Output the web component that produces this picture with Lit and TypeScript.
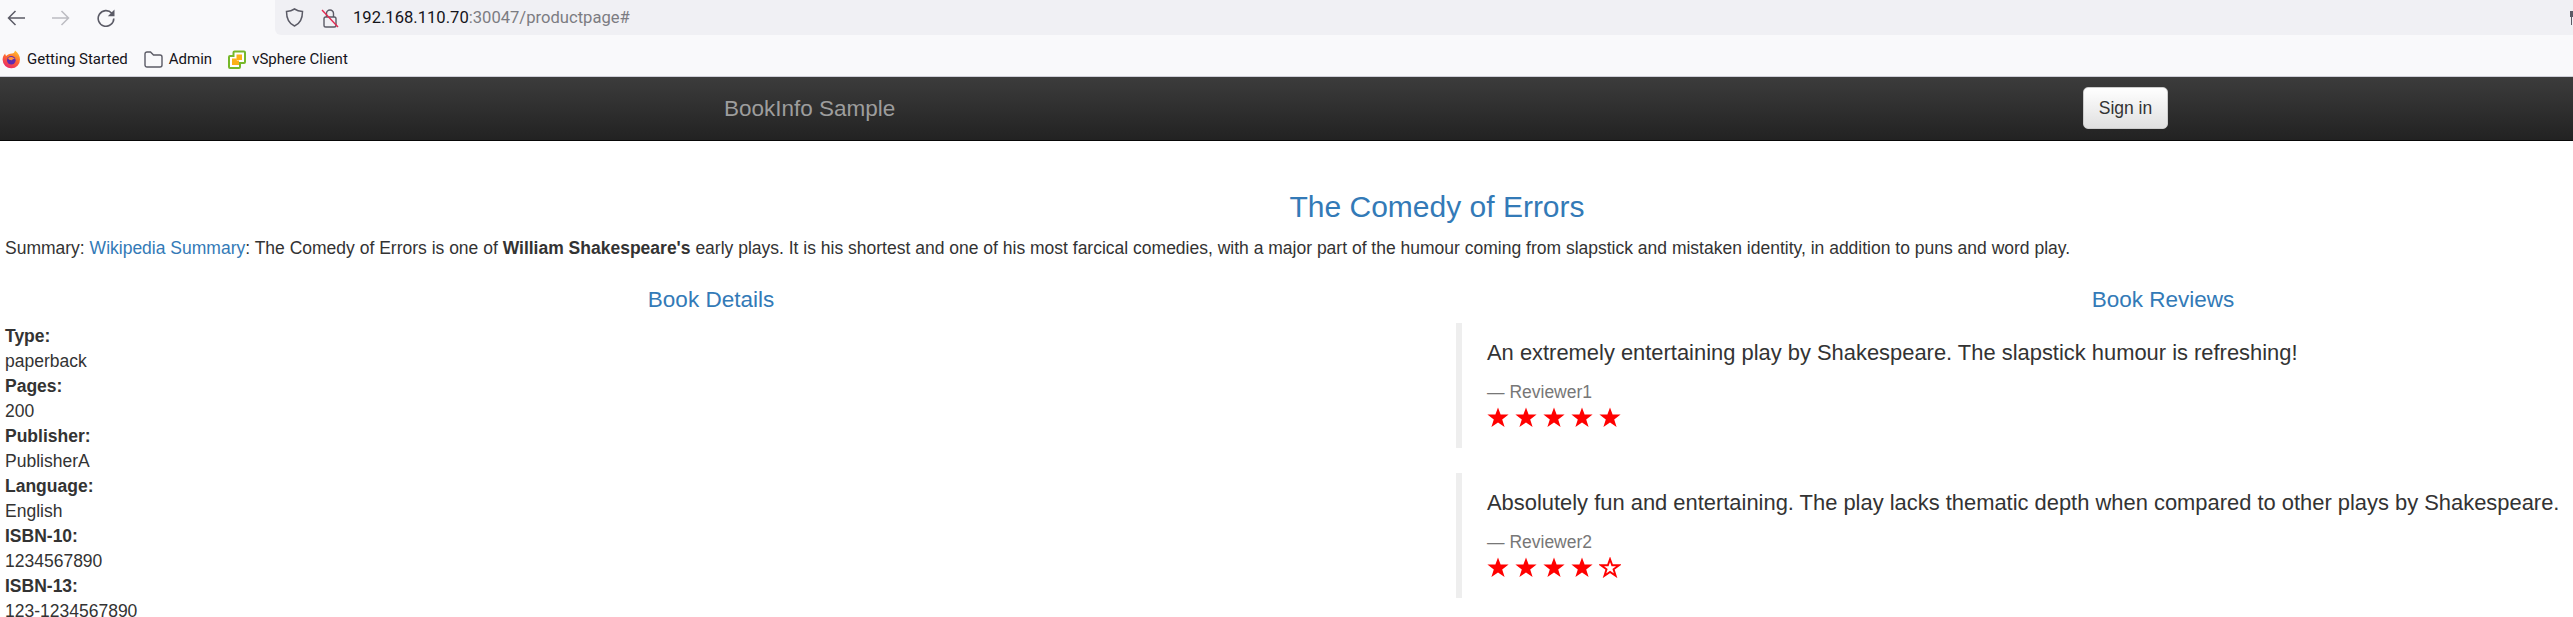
import { LitElement, html, css, svg } from "lit";
import { customElement } from "lit/decorators.js";

const DETAILS = [
  ["Type:", "paperback"],
  ["Pages:", "200"],
  ["Publisher:", "PublisherA"],
  ["Language:", "English"],
  ["ISBN-10:", "1234567890"],
  ["ISBN-13:", "123-1234567890"],
];

const REVIEWS = [
  {
    text: "An extremely entertaining play by Shakespeare. The slapstick humour is refreshing!",
    who: "Reviewer1",
    stars: 5,
  },
  {
    text: "Absolutely fun and entertaining. The play lacks thematic depth when compared to other plays by Shakespeare.",
    who: "Reviewer2",
    stars: 4,
  },
];

const STAR = "11,0.4 13.6,7.6 21.6,7.6 15.200,12.400 17.600,20 11,15.400 4.400,20 6.800,12.400 0.400,7.600 8.400,7.600";

@customElement("app-root")
export class AppRoot extends LitElement {
  static styles = css`
    :host {
      display: block;
      width: 2573px;
      height: 617px;
      overflow: hidden;
      background: #fff;
      font-family: "Liberation Sans", Arial, sans-serif;
      font-size: 17.5px;
      line-height: 25px;
      color: #333;
    }
    .toolbar {
      height: 36px;
      display: flex;
      align-items: center;
      background: #f9f9fb;
    }
    .nav-icons {
      width: 275px;
      flex: none;
      display: flex;
      align-items: center;
      gap: 27px;
      padding-left: 7px;
      box-sizing: border-box;
    }
    .url-bar {
      flex: 1;
      height: 35px;
      align-self: flex-start;
      background: #f0f0f4;
      border-bottom-left-radius: 6px;
      display: flex;
      align-items: center;
      font-family: Roboto, sans-serif;
      font-size: 16.600px;
      color: #15141a;
      padding-left: 10px;
    }
    .url-bar .shield {
      margin-right: 17px;
    }
    .url-bar .lock {
      margin-right: 14px;
    }
    .url-bar .dim {
      color: #7c7c82;
    }
    .url-bar .clipped {
      margin-left: auto;
    }
    .bookmarks {
      height: 41px;
      box-sizing: border-box;
      display: flex;
      align-items: center;
      padding: 6px 0 0 2px;
      background: #f9f9fb;
      border-bottom: 1px solid #cfcfd8;
      font-family: Roboto, sans-serif;
      font-size: 15px;
      color: #15141a;
    }
    .mark {
      display: flex;
      align-items: center;
      gap: 6px;
      margin-right: 16px;
    }
    .navbar {
      height: 64px;
      box-sizing: border-box;
      padding-bottom: 1px;
      background: linear-gradient(to bottom, #3c3c3c, #222);
      border-bottom: 1px solid #080808;
      display: flex;
      align-items: center;
      width: 2874px;
    }
    .brand {
      margin-left: 724px;
      width: 1359px;
      font-size: 22.5px;
      color: #9d9d9d;
    }
    .sign-in {
      width: 85px;
      height: 42px;
      box-sizing: border-box;
      padding: 0;
      font: inherit;
      font-size: 17.5px;
      color: #333;
      border: 1px solid #ccc;
      border-radius: 5px;
      background: linear-gradient(to bottom, #fff, #e0e0e0);
    }
    .page {
      width: 2874px;
    }
    h3 {
      margin: 0;
      padding-top: 48px;
      line-height: 35px;
      font-size: 30px;
      font-weight: 500;
      text-align: center;
      color: #337ab7;
    }
    .summary {
      margin: 0;
      padding: 12px 0 0 5px;
    }
    .summary a {
      color: #337ab7;
      text-decoration: none;
    }
    .columns {
      display: grid;
      grid-template-columns: 1441px 1444px;
    }
    h4 {
      margin: 0;
      padding-top: 26px;
      line-height: 25px;
      font-size: 22.5px;
      font-weight: 500;
      text-align: center;
      color: #337ab7;
    }
    .details-head {
      padding-right: 19px;
    }
    dl {
      margin: 12px 0 0;
      padding-left: 5px;
    }
    dt {
      font-weight: 700;
    }
    dd {
      margin: 0;
    }
    .reviews {
      padding: 11px 0 0 15px;
    }
    blockquote {
      margin: 0 0 25px;
      height: 125px;
      box-sizing: border-box;
      padding: 13.5px 25px 0;
      border-left: 6px solid #eee;
      font-size: 21.920px;
      line-height: 31px;
    }
    blockquote p {
      margin: 0 0 12px;
    }
    .who {
      font-size: 17.5px;
      line-height: 25px;
      color: #777;
    }
    .stars {
      display: flex;
      gap: 6px;
      height: 25px;
      align-items: center;
    }
    svg {
      display: block;
      flex: none;
    }
  `;

  renderStar(filled: boolean) {
    return html`<svg width="22" height="21" viewBox="0 0 22 21">
      ${filled
        ? svg`<polygon points=${STAR} fill="#f00"></polygon>`
        : svg`<polygon points=${STAR} fill="#fff" stroke="#f00" stroke-width="2.300" transform="translate(1.800 1.900) scale(.84)"></polygon>`}
    </svg>`;
  }

  renderToolbar() {
    return html`<div class="toolbar">
      <div class="nav-icons">
        <svg width="18" height="18" viewBox="0 0 18 18" fill="none" stroke="#5b5b66" stroke-width="1.500">
          <path d="M18 9H1.500M8.500 2 1.500 9l7 7"></path>
        </svg>
        <svg width="18" height="18" viewBox="0 0 18 18" fill="none" stroke="#bcbcc2" stroke-width="1.500">
          <path d="M0 9h16.500M9.500 2l7 7-7 7"></path>
        </svg>
        <svg width="18" height="18" viewBox="0 0 18 18" fill="none" stroke="#5b5b66" stroke-width="1.600">
          <path d="M14.800 4.200A7.800 7.800 0 1 0 16.800 9.500"></path>
          <path d="M17.500 0.500v6.700h-6.700z" fill="#5b5b66" stroke="none"></path>
        </svg>
      </div>
      <div class="url-bar">
        <svg class="shield" width="19" height="19" viewBox="0 0 19 19" fill="none" stroke="#5b5b66" stroke-width="1.500">
          <path d="M9.500 1c2.300 1.500 5 2.300 8 2.500 0 7-1.500 11.800-8 14.500C3 15.300 1.500 10.500 1.500 3.500c3-.2 5.700-1 8-2.500z"></path>
        </svg>
        <svg class="lock" width="18" height="20" viewBox="0 0 18 20" fill="none">
          <path d="M5.500 9V5.500a3.500 3.500 0 0 1 7 0V9" stroke="#5b5b66" stroke-width="1.400"></path>
          <rect x="3" y="9" width="12" height="10" rx="1.800" stroke="#5b5b66" stroke-width="1.400"></rect>
          <path d="M1 2l16 17" stroke="#e22850" stroke-width="1.400"></path>
        </svg>
        <span>192.168.110.70</span><span class="dim">:30047/productpage#</span>
        <svg class="clipped" width="3" height="14" viewBox="0 0 3 14">
          <path d="M0 0h3v6H2v8H1V6H0z" fill="#5b5b66"></path>
        </svg>
      </div>
    </div>`;
  }

  renderBookmarks() {
    return html`<div class="bookmarks">
      <div class="mark">
        <svg width="19" height="19" viewBox="0 0 19 19">
          <defs>
            <linearGradient id="fx" x1="0.750" y1="0" x2="0.250" y2="1">
              <stop offset="0" stop-color="#ffc02e"></stop>
              <stop offset="0.450" stop-color="#ff6a30"></stop>
              <stop offset="1" stop-color="#e8246c"></stop>
            </linearGradient>
          </defs>
          <path d="M13 .5c3.300 2.500 5 5.500 5 9a8.700 8.700 0 0 1-17.400.3C.6 7 1.800 4.800 3.200 3.500c0 1.200.5 2 1 2.500C5.500 4.300 7.500 3.600 10 3.500c1.500-.1 2.700-1.200 3-3z" fill="url(#fx)"></path>
          <circle cx="9.300" cy="10.200" r="4.300" fill="#5f2bb0"></circle>
          <path d="M6 8c2-1.400 5-1.300 6.800 1-1.300-.1-2.400.2-3 1.200C8 10.300 6.600 9.500 6 8z" fill="#ff9240"></path>
        </svg>
        <span>Getting Started</span>
      </div>
      <div class="mark">
        <svg width="19" height="17" viewBox="0 0 19 17" fill="none" stroke="#5b5b66" stroke-width="1.400">
          <path d="M1 3a2 2 0 0 1 2-2h3.500l3 3H16a2 2 0 0 1 2 2v8a2 2 0 0 1-2 2H3a2 2 0 0 1-2-2z"></path>
        </svg>
        <span>Admin</span>
      </div>
      <div class="mark">
        <svg width="18" height="19" viewBox="0 0 18 19">
          <path d="M6.500 1.500H16a1 1 0 0 1 1 1V12a1 1 0 0 1-1 1h-4v4a1 1 0 0 1-1 1H2a1 1 0 0 1-1-1V7a1 1 0 0 1 1-1h3.500V2.500a1 1 0 0 1 1-1z" fill="#fff" stroke="#76b82a" stroke-width="2"></path>
          <path d="M8.500 4.500h5.500v5.500h-5.500z" fill="#fbb117"></path>
          <path d="M4 8.500h4.800V10.500H11v4.500H4z" fill="#fbb117"></path>
        </svg>
        <span>vSphere Client</span>
      </div>
    </div>`;
  }

  render() {
    return html`
      ${this.renderToolbar()} ${this.renderBookmarks()}
      <div class="navbar">
        <div class="brand">BookInfo Sample</div>
        <button class="sign-in">Sign in</button>
      </div>
      <div class="page">
        <h3>The Comedy of Errors</h3>
        <p class="summary">
          Summary: <a href="#">Wikipedia Summary</a>: The Comedy of Errors is one of
          <b>William Shakespeare's</b> early plays. It is his shortest and one of his most
          farcical comedies, with a major part of the humour coming from slapstick and mistaken
          identity, in addition to puns and word play.
        </p>
        <div class="columns">
          <div>
            <h4 class="details-head">Book Details</h4>
            <dl>
              ${DETAILS.map(([k, v]) => html`<dt>${k}</dt><dd>${v}</dd>`)}
            </dl>
          </div>
          <div>
            <h4>Book Reviews</h4>
            <div class="reviews">
              ${REVIEWS.map(
                (r) => html`<blockquote>
                  <p>${r.text}</p>
                  <div class="who">— ${r.who}</div>
                  <div class="stars">
                    ${[0, 1, 2, 3, 4].map((i) => this.renderStar(i < r.stars))}
                  </div>
                </blockquote>`
              )}
            </div>
          </div>
        </div>
      </div>
    `;
  }
}
